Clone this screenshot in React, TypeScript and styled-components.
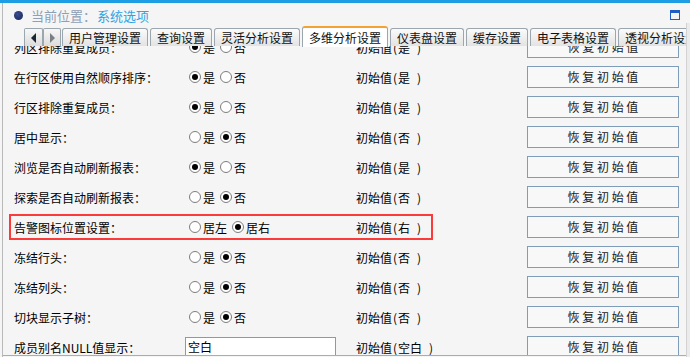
import styled, { createGlobalStyle } from "styled-components";

const GlobalStyle = createGlobalStyle`
  html, body {
    margin: 0;
    padding: 0;
    background: #f5f5f5;
  }
  body {
    font-family: "Noto Sans CJK SC", "Noto Sans", sans-serif;
  }
`;

const Page = styled.div`
  width: 690px;
  height: 357px;
  overflow: hidden;
  background: #f5f5f5;
  display: flex;
  flex-direction: column;
`;

const TopBar = styled.div`
  flex: none;
  height: 3px;
  background: #1c9de4;
`;

const Frame = styled.div`
  flex: 1;
  min-height: 0;
  margin-left: 2px;
  border-left: 1px solid #b9b9b9;
  display: flex;
`;

const Main = styled.div`
  flex: 1;
  min-width: 0;
  display: flex;
  flex-direction: column;
`;

const Track = styled.div`
  flex: none;
  width: 3px;
  margin-top: 20px;
  border-left: 1px solid #d2d2d2;
  background: #ebebeb;
`;

const Header = styled.div`
  flex: none;
  height: 23px;
  padding: 1px 6px 0 11px;
  box-sizing: border-box;
  display: flex;
  align-items: center;
  font-size: 13px;
`;

const Bullet = styled.span`
  width: 9px;
  height: 9px;
  border-radius: 50%;
  background: radial-gradient(circle at 40% 35%, #3a4f8e, #14235a);
  margin-right: 8px;
`;

const Crumb = styled.span`
  color: #8e9fb6;
`;

const CrumbLink = styled.span`
  color: #32a3e2;
  margin-left: 1px;
`;

const Spacer = styled.span`
  flex: 1;
`;

const TabRow = styled.div`
  flex: none;
  height: 20px;
  display: flex;
  align-items: flex-end;
  gap: 2px;
  padding-left: 21px;
  position: relative;
  z-index: 1;
  overflow-x: clip;
  overflow-y: visible;
`;

const ScrollButtons = styled.div`
  display: flex;
  height: 18px;
  margin-right: -1px;
`;

const ScrollButton = styled.div<{ $w: number }>`
  width: ${(p) => p.$w}px;
  height: 18px;
  box-sizing: border-box;
  border: 1px solid #9ca6ae;
  border-bottom: none;
  border-radius: 2px 2px 0 0;
  background: linear-gradient(#f7f7f7, #dcdcdc);
  display: flex;
  align-items: center;
  justify-content: center;
`;

const Tab = styled.div<{ $active?: boolean }>`
  flex: none;
  height: ${(p) => (p.$active ? 21 : 18)}px;
  box-sizing: border-box;
  padding: 0 6px;
  border: 1px solid #9ca6ae;
  border-bottom: none;
  border-top: ${(p) => (p.$active ? "2px solid #f3a233" : "1px solid #9ca6ae")};
  border-radius: 3px 3px 0 0;
  background: ${(p) => (p.$active ? "#ffffff" : "linear-gradient(#fbfbfb, #e3e3e3)")};
  margin-bottom: ${(p) => (p.$active ? -1 : 0)}px;
  font-size: 12px;
  line-height: ${(p) => (p.$active ? 19 : 17)}px;
  color: #111;
  white-space: nowrap;
`;

const Panel = styled.div`
  flex: 1;
  min-height: 0;
  overflow: hidden;
  border-bottom: 1px solid #a7adb3;
  margin-bottom: 1px;
`;

const List = styled.div`
  margin-top: -14px;
`;

const Row = styled.div`
  position: relative;
  height: 30px;
  padding-left: 11px;
  display: grid;
  grid-template-columns: 175px 167px 171px 152px;
  align-items: center;
  font-size: 12px;
  color: #000;
`;

const Highlight = styled.div`
  position: absolute;
  left: 6px;
  top: 2px;
  width: 424px;
  height: 26px;
  box-sizing: border-box;
  border: 2px solid #fb3a3a;
  pointer-events: none;
`;

const Label = styled.span`
  white-space: nowrap;
`;

const RadioGroup = styled.div`
  display: flex;
  align-items: center;
`;

const Option = styled.span`
  display: flex;
  align-items: center;
  margin-right: 5px;
`;

const Radio = styled.span<{ $checked?: boolean }>`
  width: 12px;
  height: 12px;
  box-sizing: border-box;
  border-radius: 50%;
  border: 1px solid #7d7d7d;
  background: #fff;
  margin-right: 2px;
  display: flex;
  align-items: center;
  justify-content: center;

  &::after {
    content: "";
    width: 6px;
    height: 6px;
    border-radius: 50%;
    background: ${(p) => (p.$checked ? "#000" : "transparent")};
  }
`;

const TextBox = styled.div`
  width: 151px;
  height: 20px;
  margin-left: -4px;
  box-sizing: border-box;
  border: 1px solid #7f9db9;
  background: #fff;
  padding-left: 2px;
  line-height: 18px;
`;

const Initial = styled.span`
  white-space: nowrap;
  display: flex;
  align-items: center;
`;

// half-width slot, like the ASCII cells of the original bitmap font
const Half = styled.span`
  display: inline-block;
  width: 6px;
  text-align: center;
`;

const ResetButton = styled.div`
  width: 152px;
  height: 22px;
  box-sizing: border-box;
  border: 1px solid #7f9db9;
  background: #f8f8f8;
  text-align: center;
  line-height: 20px;
  color: #1a1a1a;
  white-space: pre;
`;

type Setting = {
  label: string;
  options?: string[];
  value: string;
  initial: string;
  highlight?: boolean;
};

const yesNo = ["是", "否"];

const settings: Setting[] = [
  { label: "列区排除重复成员：", options: yesNo, value: "是", initial: "是" },
  { label: "在行区使用自然顺序排序：", options: yesNo, value: "是", initial: "是" },
  { label: "行区排除重复成员：", options: yesNo, value: "是", initial: "是" },
  { label: "居中显示：", options: yesNo, value: "否", initial: "否" },
  { label: "浏览是否自动刷新报表：", options: yesNo, value: "是", initial: "是" },
  { label: "探索是否自动刷新报表：", options: yesNo, value: "否", initial: "否" },
  {
    label: "告警图标位置设置：",
    options: ["居左", "居右"],
    value: "居右",
    initial: "右",
    highlight: true,
  },
  { label: "冻结行头：", options: yesNo, value: "否", initial: "否" },
  { label: "冻结列头：", options: yesNo, value: "否", initial: "否" },
  { label: "切块显示子树：", options: yesNo, value: "否", initial: "否" },
  { label: "成员别名NULL值显示：", value: "空白", initial: "空白" },
];

const tabs = [
  "用户管理设置",
  "查询设置",
  "灵活分析设置",
  "多维分析设置",
  "仪表盘设置",
  "缓存设置",
  "电子表格设置",
  "透视分析设置",
];

function MaximizeIcon() {
  return (
    <svg width="10" height="10" viewBox="0 0 10 10">
      <rect x="0.5" y="0.5" width="9" height="9" fill="none" stroke="#1f5ec4" />
      <rect x="0" y="0" width="10" height="3" fill="#1f5ec4" />
    </svg>
  );
}

function Arrow({ dir, color }: { dir: "left" | "right"; color: string }) {
  const points = dir === "left" ? "6,1 6,11 1,6" : "1,1 1,11 6,6";
  return (
    <svg width="7" height="12" viewBox="0 0 7 12">
      <polygon points={points} fill={color} />
    </svg>
  );
}

export default function App() {
  return (
    <>
      <GlobalStyle />
      <Page>
        <TopBar />
        <Frame>
          <Main>
            <Header>
              <Bullet />
              <Crumb>当前位置：</Crumb>
              <CrumbLink>系统选项</CrumbLink>
              <Spacer />
              <MaximizeIcon />
            </Header>
            <TabRow>
              <ScrollButtons>
                <ScrollButton $w={19}>
                  <Arrow dir="left" color="#1b2533" />
                </ScrollButton>
                <ScrollButton $w={18}>
                  <Arrow dir="right" color="#7a7f86" />
                </ScrollButton>
              </ScrollButtons>
              {tabs.map((t) => (
                <Tab key={t} $active={t === "多维分析设置"}>
                  {t}
                </Tab>
              ))}
            </TabRow>
            <Panel>
              <List>
                {settings.map((s) => (
                  <Row key={s.label}>
                    {s.highlight && <Highlight />}
                    <Label>{s.label}</Label>
                    {s.options ? (
                      <RadioGroup>
                        {s.options.map((o) => (
                          <Option key={o}>
                            <Radio $checked={o === s.value} />
                            {o}
                          </Option>
                        ))}
                      </RadioGroup>
                    ) : (
                      <TextBox>{s.value}</TextBox>
                    )}
                    <Initial>
                      初始值<Half>(</Half>
                      {s.initial}
                      <Half> </Half>
                      <Half>)</Half>
                    </Initial>
                    <ResetButton>恢 复 初 始 值</ResetButton>
                  </Row>
                ))}
              </List>
            </Panel>
          </Main>
          <Track />
        </Frame>
      </Page>
    </>
  );
}
